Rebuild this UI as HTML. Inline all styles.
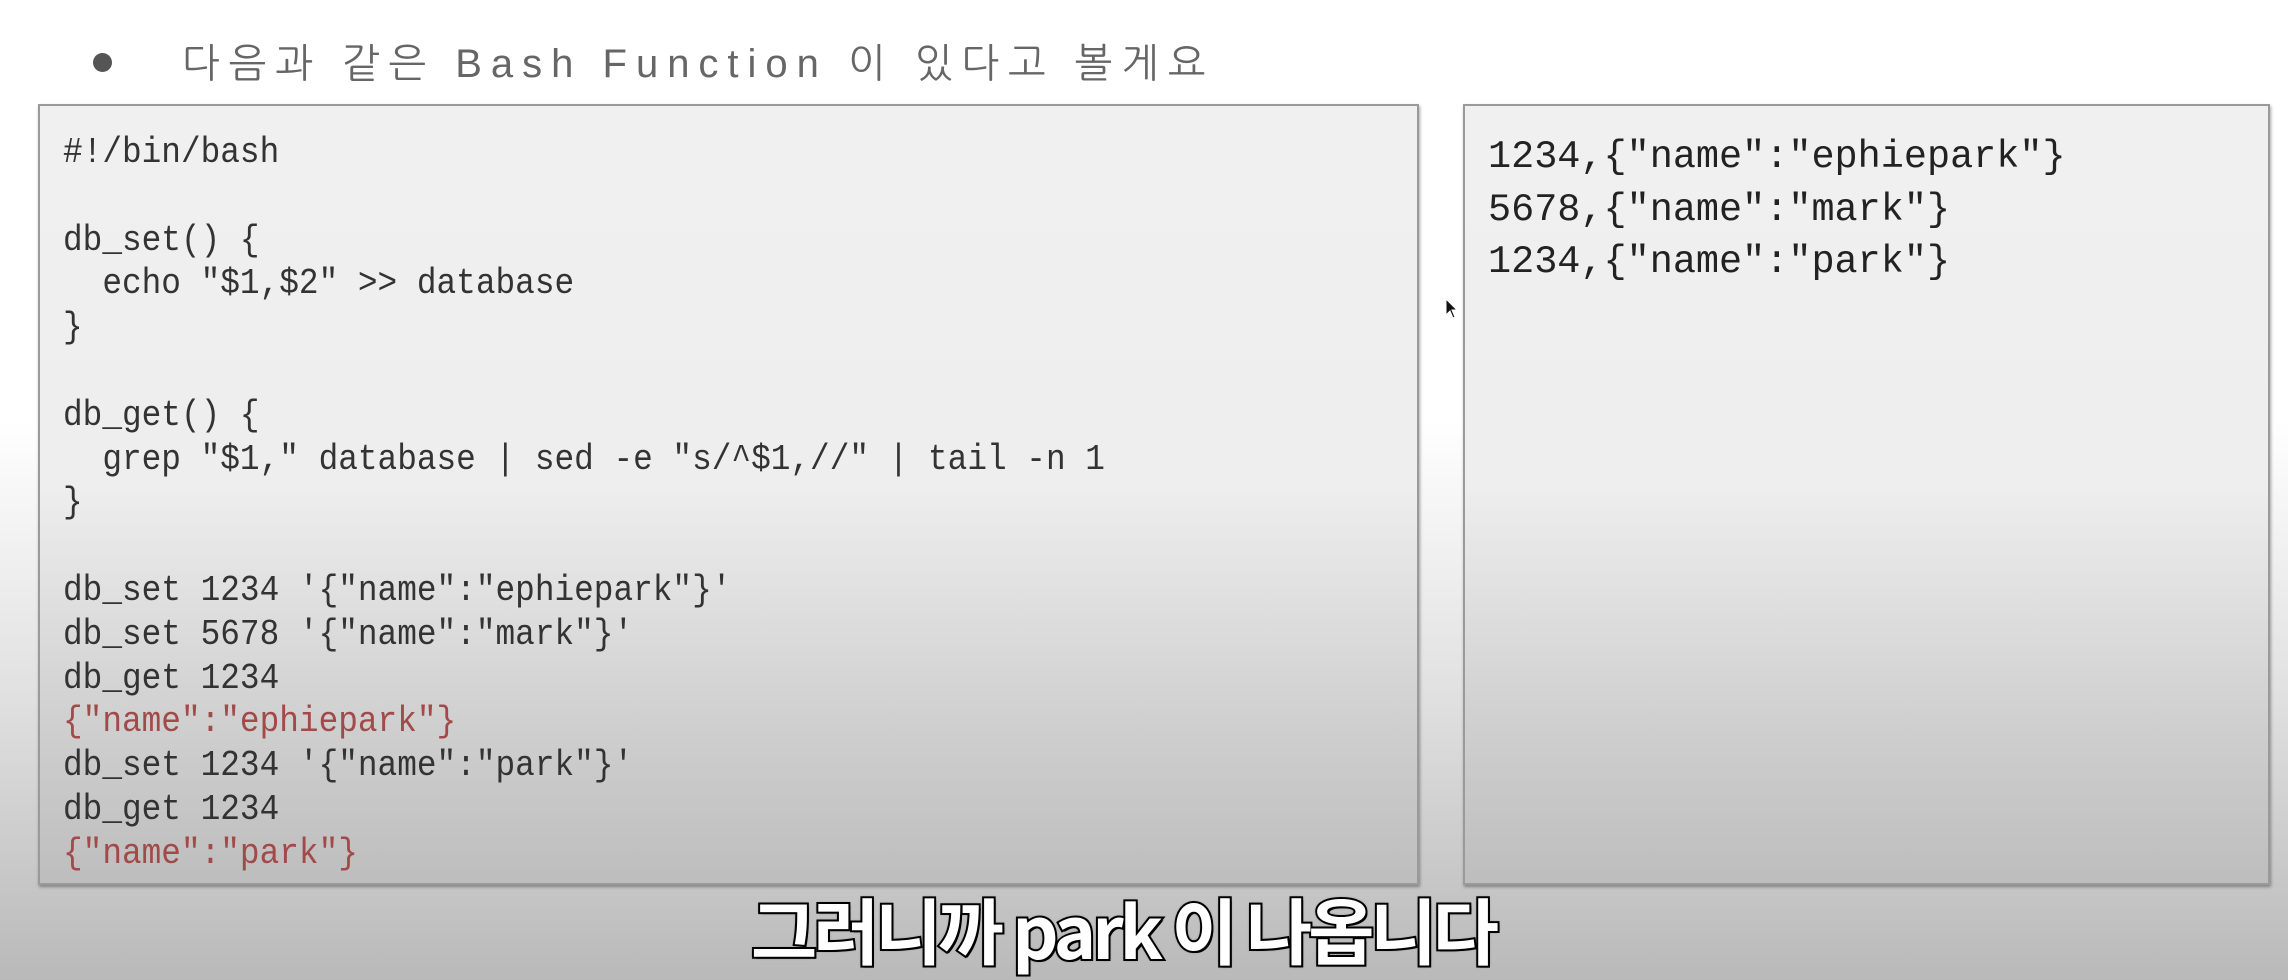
<!DOCTYPE html>
<html><head><meta charset="utf-8"><style>
html,body{margin:0;padding:0}
body{width:2288px;height:980px;overflow:hidden;position:relative;background:linear-gradient(#fff 0px,#fff 420px,#e0e0e0 700px,#b9b9b9 980px);font-family:"Liberation Sans","Noto Sans CJK KR",sans-serif}
.bullet{position:absolute;left:93px;top:53px;width:19px;height:19px;border-radius:50%;background:#555}
.title{position:absolute;left:182px;top:38px;font-size:40px;color:#666;font-family:"Liberation Sans","NanumGothic",sans-serif;letter-spacing:9px;white-space:pre}
.panel{position:absolute;top:104px;height:781px;border:2px solid #9a9a9a;background:linear-gradient(#f0f0f0 0px,#eeeeee 380px,#cfcfcf 620px,#bdbdbd 781px);box-shadow:1px 2px 3px rgba(0,0,0,.35);box-sizing:border-box}
.code{position:absolute;left:63px;top:131px;font-family:"Liberation Mono",monospace;font-size:36px;line-height:43.8px;color:#333;white-space:pre;transform:scaleX(0.91);transform-origin:0 0}
.r{color:#a24a4a}
.out{position:absolute;left:1488px;top:131px;font-family:"Liberation Mono",monospace;font-size:38.5px;line-height:52.5px;color:#222;white-space:pre}
.sub{position:absolute;left:0;width:2246px;text-align:center;top:888px;font-size:72px;font-weight:bold;color:#fff;font-family:"Noto Sans CJK KR","NanumGothic",sans-serif;line-height:80px;letter-spacing:-4px;-webkit-text-stroke:4px #000;paint-order:stroke fill;text-shadow:0 0 3px #000,2px 2px 0 #000}
</style></head><body>
<div class="bullet"></div>
<div class="title">다음과 같은 Bash Function 이 있다고 볼게요</div>
<div class="panel" style="left:38px;width:1381px"></div>
<div class="panel" style="left:1463px;width:807px"></div>
<div class="code">#!/bin/bash

db_set() {
  echo "$1,$2" &gt;&gt; database
}

db_get() {
  grep "$1," database | sed -e "s/^$1,//" | tail -n 1
}

db_set 1234 '{"name":"ephiepark"}'
db_set 5678 '{"name":"mark"}'
db_get 1234
<span class="r">{"name":"ephiepark"}</span>
db_set 1234 '{"name":"park"}'
db_get 1234
<span class="r">{"name":"park"}</span></div>
<div class="out">1234,{"name":"ephiepark"}
5678,{"name":"mark"}
1234,{"name":"park"}</div>
<svg style="position:absolute;left:1445px;top:298px" width="14" height="22" viewBox="0 0 14 22"><path d="M1 1 L1 17 L5 13 L8 20 L10 19 L7 12 L12 12 Z" fill="#111" stroke="#fff" stroke-width="1"/></svg>
<div class="sub">그러니까 park 이 나옵니다</div>
</body></html>
